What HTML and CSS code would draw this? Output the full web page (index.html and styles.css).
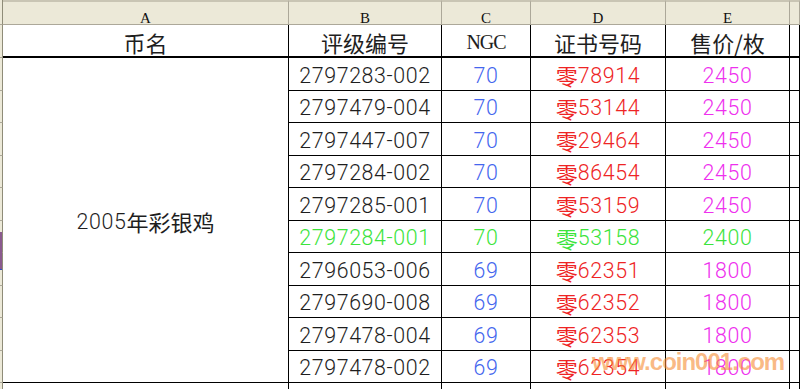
FILE: index.html
```html
<!DOCTYPE html>
<html lang="zh-CN">
<head>
<meta charset="utf-8">
<title>2005年彩银鸡</title>
<link rel="stylesheet" href="styles.css">
</head>
<body>
<div class="sheet">
  <div class="rh"></div>
  <div class="ch">A</div>
  <div class="ch">B</div>
  <div class="ch">C</div>
  <div class="ch">D</div>
  <div class="ch">E</div>
  <div class="ch"></div>

  <div class="rh"></div>
  <div class="c t"><span class="han">币名</span></div>
  <div class="c t"><span class="han">评级编号</span></div>
  <div class="c t latin">NGC</div>
  <div class="c t"><span class="han">证书号码</span></div>
  <div class="c t"><span class="han">售价/枚</span></div>
  <div class="c t"></div>

  <div class="rh"></div>
  <div class="c name">2005<span class="han">年彩银鸡</span></div>
  <div class="c d">2797283-002</div><div class="c d blue">70</div><div class="c d red"><span class="han">零</span>78914</div><div class="c d pink">2450</div><div class="c d"></div>

  <div class="rh"></div>
  <div class="c d">2797479-004</div><div class="c d blue">70</div><div class="c d red"><span class="han">零</span>53144</div><div class="c d pink">2450</div><div class="c d"></div>

  <div class="rh"></div>
  <div class="c d">2797447-007</div><div class="c d blue">70</div><div class="c d red"><span class="han">零</span>29464</div><div class="c d pink">2450</div><div class="c d"></div>

  <div class="rh"></div>
  <div class="c d">2797284-002</div><div class="c d blue">70</div><div class="c d red"><span class="han">零</span>86454</div><div class="c d pink">2450</div><div class="c d"></div>

  <div class="rh"></div>
  <div class="c d">2797285-001</div><div class="c d blue">70</div><div class="c d red"><span class="han">零</span>53159</div><div class="c d pink">2450</div><div class="c d"></div>

  <div class="rh"></div>
  <div class="c d green">2797284-001</div><div class="c d green">70</div><div class="c d green"><span class="han">零</span>53158</div><div class="c d green">2400</div><div class="c d"></div>

  <div class="rh"></div>
  <div class="c d">2796053-006</div><div class="c d blue">69</div><div class="c d red"><span class="han">零</span>62351</div><div class="c d pink">1800</div><div class="c d"></div>

  <div class="rh"></div>
  <div class="c d">2797690-008</div><div class="c d blue">69</div><div class="c d red"><span class="han">零</span>62352</div><div class="c d pink">1800</div><div class="c d"></div>

  <div class="rh"></div>
  <div class="c d">2797478-004</div><div class="c d blue">69</div><div class="c d red"><span class="han">零</span>62353</div><div class="c d pink">1800</div><div class="c d"></div>

  <div class="rh"></div>
  <div class="c d">2797478-002</div><div class="c d blue">69</div><div class="c d red"><span class="han">零</span>62354</div><div class="c d pink">1800</div><div class="c d"></div>

  <div class="rh last"></div>
  <div class="c e"></div><div class="c e"></div><div class="c e"></div><div class="c e"></div><div class="c e"></div><div class="c e"></div>

  <div class="sel"></div>
  <div class="mark">www.coin001.com</div>
</div>
</body>
</html>
```

FILE: styles.css
```css
* { box-sizing: border-box; }

html, body {
  margin: 0;
  padding: 0;
  background: #ffffff;
  overflow: hidden;
}

.sheet {
  position: relative;
  width: 800px;
  height: 389px;
  overflow: hidden;
  display: grid;
  grid-template-columns: 3px 286px 153px 89px 135px 124px 1fr;
  grid-template-rows: 25px 33px 33px 32px 33px 32px 33px 32px 33px 32px 33px 32px 20px;
  font-family: "Roboto", "Noto Sans CJK SC", sans-serif;
  font-weight: 300;
  font-size: 21.4px;
  font-variant-numeric: tabular-nums;
  letter-spacing: 0.6px;
  color: #1e1e1e;
}

.rh {
  background: #ece9d8;
  border-right: 1px solid #8f8c78;
  border-bottom: 1px solid #aca899;
}

.rh.last { border-bottom: 0; }

.ch {
  background: #ece9d8;
  border-top: 2px solid #c9c5b4;
  border-right: 1px solid #aca899;
  border-bottom: 1px solid #aca899;
  display: flex;
  align-items: flex-end;
  justify-content: center;
  font-family: "Liberation Serif", serif;
  font-weight: 400;
  font-size: 15px;
  line-height: 12px;
  letter-spacing: 0;
  color: #111111;
}

.c {
  display: flex;
  align-items: center;
  justify-content: center;
  border-right: 1px solid #000000;
  border-bottom: 1px solid #000000;
  white-space: nowrap;
}

.t {
  border-bottom-width: 2px;
  padding-top: 3px;
}

.d { padding-top: 2px; }

.e { border-bottom: 0; }

.name {
  grid-row: span 10;
  padding-top: 2px;
}

.han {
  font-family: "Noto Sans CJK SC", sans-serif;
  font-weight: 400;
  font-size: 22px;
  letter-spacing: 0;
}

.latin {
  font-family: "Liberation Serif", serif;
  font-weight: 400;
  font-size: 20px;
  letter-spacing: -1px;
}

.blue { color: #4466ee; }
.red { color: #ee2424; }
.pink { color: #ee30ee; }
.green { color: #3ce43c; }

.sel {
  position: absolute;
  left: 0;
  top: 232px;
  width: 2px;
  height: 38px;
  background: #8a5a8e;
  border-bottom: 1px solid #3050c0;
}

.mark {
  position: absolute;
  left: 592px;
  top: 350px;
  font-family: "Liberation Sans", sans-serif;
  font-weight: bold;
  font-size: 24px;
  line-height: 24px;
  letter-spacing: -1px;
  color: rgba(246, 140, 50, 0.6);
  white-space: nowrap;
}
```
